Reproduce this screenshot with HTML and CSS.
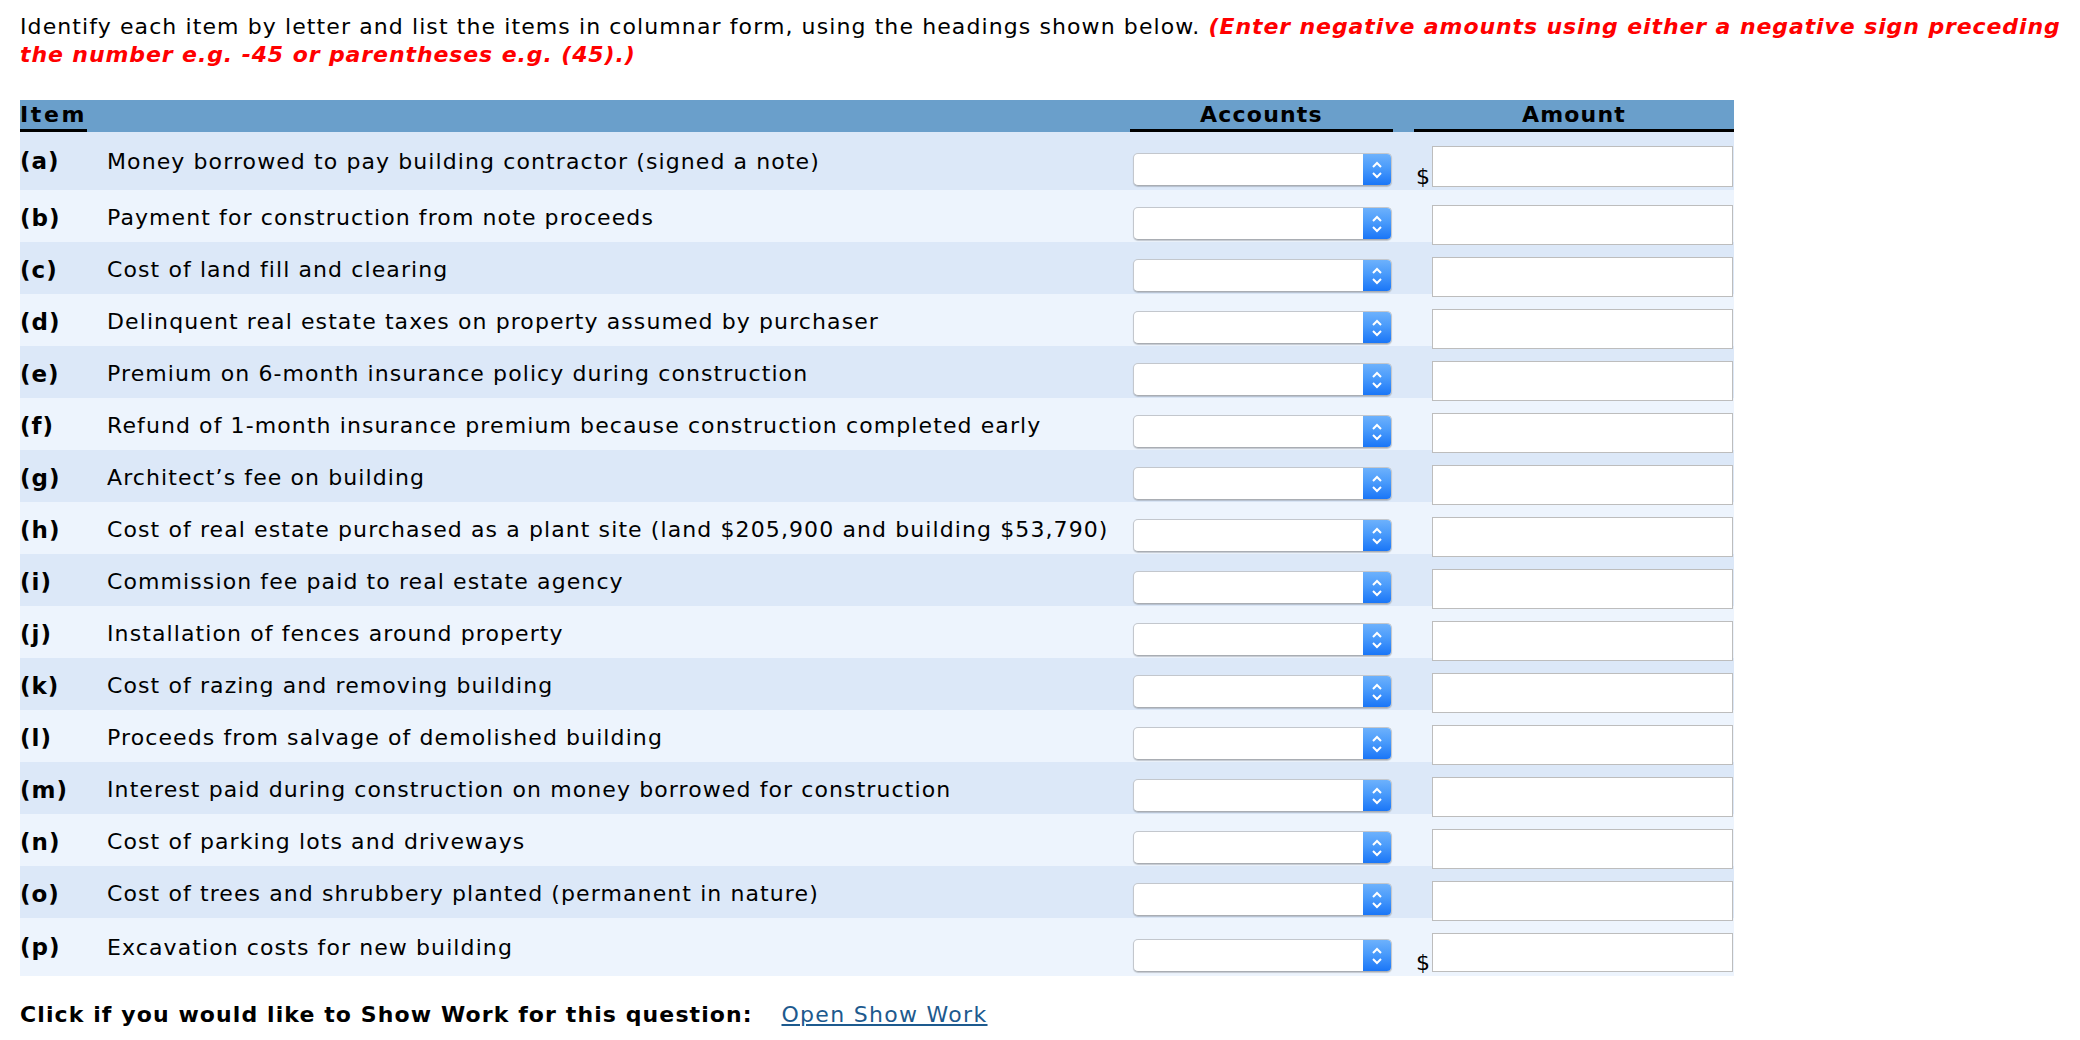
FILE: index.html
```html
<!DOCTYPE html>
<html>
<head>
<meta charset="utf-8">
<link rel="stylesheet" href="styles.css">
</head>
<body>
<div class="page">
  <p class="intro">Identify each item by letter and list the items in columnar form, using the headings shown below. <span class="warn">(Enter negative amounts using either a negative sign preceding<br>the number e.g. -45 or parentheses e.g. (45).)</span></p>

  <div class="table">
    <div class="row head">
      <div class="h-item"><span>Item</span></div>
      <div class="h-desc"></div>
      <div class="h-col">Accounts</div>
      <div class="h-gap"></div>
      <div class="h-col">Amount</div>
    </div>

    <div class="row dark money">
      <div class="letter">(a)</div><div class="desc">Money borrowed to pay building contractor (signed a note)</div>
      <div class="acc"><div class="sel"><span class="sel-field"></span><span class="sel-btn"><svg width="12" height="20" viewBox="0 0 12 20"><path d="M2 7 L6 3 L10 7 M2 13 L6 17 L10 13" fill="none" stroke="#fff" stroke-width="2"/></svg></span></div></div>
      <div></div>
      <div class="amt"><span class="dollar">$</span><input class="inp" type="text"></div>
    </div>
    <div class="row light">
      <div class="letter">(b)</div><div class="desc">Payment for construction from note proceeds</div>
      <div class="acc"><div class="sel"><span class="sel-field"></span><span class="sel-btn"><svg width="12" height="20" viewBox="0 0 12 20"><path d="M2 7 L6 3 L10 7 M2 13 L6 17 L10 13" fill="none" stroke="#fff" stroke-width="2"/></svg></span></div></div>
      <div></div>
      <div class="amt"><span class="dollar"></span><input class="inp" type="text"></div>
    </div>
    <div class="row dark">
      <div class="letter">(c)</div><div class="desc">Cost of land fill and clearing</div>
      <div class="acc"><div class="sel"><span class="sel-field"></span><span class="sel-btn"><svg width="12" height="20" viewBox="0 0 12 20"><path d="M2 7 L6 3 L10 7 M2 13 L6 17 L10 13" fill="none" stroke="#fff" stroke-width="2"/></svg></span></div></div>
      <div></div>
      <div class="amt"><span class="dollar"></span><input class="inp" type="text"></div>
    </div>
    <div class="row light">
      <div class="letter">(d)</div><div class="desc">Delinquent real estate taxes on property assumed by purchaser</div>
      <div class="acc"><div class="sel"><span class="sel-field"></span><span class="sel-btn"><svg width="12" height="20" viewBox="0 0 12 20"><path d="M2 7 L6 3 L10 7 M2 13 L6 17 L10 13" fill="none" stroke="#fff" stroke-width="2"/></svg></span></div></div>
      <div></div>
      <div class="amt"><span class="dollar"></span><input class="inp" type="text"></div>
    </div>
    <div class="row dark">
      <div class="letter">(e)</div><div class="desc">Premium on 6-month insurance policy during construction</div>
      <div class="acc"><div class="sel"><span class="sel-field"></span><span class="sel-btn"><svg width="12" height="20" viewBox="0 0 12 20"><path d="M2 7 L6 3 L10 7 M2 13 L6 17 L10 13" fill="none" stroke="#fff" stroke-width="2"/></svg></span></div></div>
      <div></div>
      <div class="amt"><span class="dollar"></span><input class="inp" type="text"></div>
    </div>
    <div class="row light">
      <div class="letter">(f)</div><div class="desc">Refund of 1-month insurance premium because construction completed early</div>
      <div class="acc"><div class="sel"><span class="sel-field"></span><span class="sel-btn"><svg width="12" height="20" viewBox="0 0 12 20"><path d="M2 7 L6 3 L10 7 M2 13 L6 17 L10 13" fill="none" stroke="#fff" stroke-width="2"/></svg></span></div></div>
      <div></div>
      <div class="amt"><span class="dollar"></span><input class="inp" type="text"></div>
    </div>
    <div class="row dark">
      <div class="letter">(g)</div><div class="desc">Architect’s fee on building</div>
      <div class="acc"><div class="sel"><span class="sel-field"></span><span class="sel-btn"><svg width="12" height="20" viewBox="0 0 12 20"><path d="M2 7 L6 3 L10 7 M2 13 L6 17 L10 13" fill="none" stroke="#fff" stroke-width="2"/></svg></span></div></div>
      <div></div>
      <div class="amt"><span class="dollar"></span><input class="inp" type="text"></div>
    </div>
    <div class="row light">
      <div class="letter">(h)</div><div class="desc">Cost of real estate purchased as a plant site (land $205,900 and building $53,790)</div>
      <div class="acc"><div class="sel"><span class="sel-field"></span><span class="sel-btn"><svg width="12" height="20" viewBox="0 0 12 20"><path d="M2 7 L6 3 L10 7 M2 13 L6 17 L10 13" fill="none" stroke="#fff" stroke-width="2"/></svg></span></div></div>
      <div></div>
      <div class="amt"><span class="dollar"></span><input class="inp" type="text"></div>
    </div>
    <div class="row dark">
      <div class="letter">(i)</div><div class="desc">Commission fee paid to real estate agency</div>
      <div class="acc"><div class="sel"><span class="sel-field"></span><span class="sel-btn"><svg width="12" height="20" viewBox="0 0 12 20"><path d="M2 7 L6 3 L10 7 M2 13 L6 17 L10 13" fill="none" stroke="#fff" stroke-width="2"/></svg></span></div></div>
      <div></div>
      <div class="amt"><span class="dollar"></span><input class="inp" type="text"></div>
    </div>
    <div class="row light">
      <div class="letter">(j)</div><div class="desc">Installation of fences around property</div>
      <div class="acc"><div class="sel"><span class="sel-field"></span><span class="sel-btn"><svg width="12" height="20" viewBox="0 0 12 20"><path d="M2 7 L6 3 L10 7 M2 13 L6 17 L10 13" fill="none" stroke="#fff" stroke-width="2"/></svg></span></div></div>
      <div></div>
      <div class="amt"><span class="dollar"></span><input class="inp" type="text"></div>
    </div>
    <div class="row dark">
      <div class="letter">(k)</div><div class="desc">Cost of razing and removing building</div>
      <div class="acc"><div class="sel"><span class="sel-field"></span><span class="sel-btn"><svg width="12" height="20" viewBox="0 0 12 20"><path d="M2 7 L6 3 L10 7 M2 13 L6 17 L10 13" fill="none" stroke="#fff" stroke-width="2"/></svg></span></div></div>
      <div></div>
      <div class="amt"><span class="dollar"></span><input class="inp" type="text"></div>
    </div>
    <div class="row light">
      <div class="letter">(l)</div><div class="desc">Proceeds from salvage of demolished building</div>
      <div class="acc"><div class="sel"><span class="sel-field"></span><span class="sel-btn"><svg width="12" height="20" viewBox="0 0 12 20"><path d="M2 7 L6 3 L10 7 M2 13 L6 17 L10 13" fill="none" stroke="#fff" stroke-width="2"/></svg></span></div></div>
      <div></div>
      <div class="amt"><span class="dollar"></span><input class="inp" type="text"></div>
    </div>
    <div class="row dark">
      <div class="letter">(m)</div><div class="desc">Interest paid during construction on money borrowed for construction</div>
      <div class="acc"><div class="sel"><span class="sel-field"></span><span class="sel-btn"><svg width="12" height="20" viewBox="0 0 12 20"><path d="M2 7 L6 3 L10 7 M2 13 L6 17 L10 13" fill="none" stroke="#fff" stroke-width="2"/></svg></span></div></div>
      <div></div>
      <div class="amt"><span class="dollar"></span><input class="inp" type="text"></div>
    </div>
    <div class="row light">
      <div class="letter">(n)</div><div class="desc">Cost of parking lots and driveways</div>
      <div class="acc"><div class="sel"><span class="sel-field"></span><span class="sel-btn"><svg width="12" height="20" viewBox="0 0 12 20"><path d="M2 7 L6 3 L10 7 M2 13 L6 17 L10 13" fill="none" stroke="#fff" stroke-width="2"/></svg></span></div></div>
      <div></div>
      <div class="amt"><span class="dollar"></span><input class="inp" type="text"></div>
    </div>
    <div class="row dark">
      <div class="letter">(o)</div><div class="desc">Cost of trees and shrubbery planted (permanent in nature)</div>
      <div class="acc"><div class="sel"><span class="sel-field"></span><span class="sel-btn"><svg width="12" height="20" viewBox="0 0 12 20"><path d="M2 7 L6 3 L10 7 M2 13 L6 17 L10 13" fill="none" stroke="#fff" stroke-width="2"/></svg></span></div></div>
      <div></div>
      <div class="amt"><span class="dollar"></span><input class="inp" type="text"></div>
    </div>
    <div class="row light money last">
      <div class="letter">(p)</div><div class="desc">Excavation costs for new building</div>
      <div class="acc"><div class="sel"><span class="sel-field"></span><span class="sel-btn"><svg width="12" height="20" viewBox="0 0 12 20"><path d="M2 7 L6 3 L10 7 M2 13 L6 17 L10 13" fill="none" stroke="#fff" stroke-width="2"/></svg></span></div></div>
      <div></div>
      <div class="amt"><span class="dollar">$</span><input class="inp" type="text"></div>
    </div>
  </div>

  <p class="show">Click if you would like to Show Work for this question: <a class="link" href="#">Open Show Work</a></p>
</div>
</body>
</html>
```

FILE: styles.css
```css
html, body {
  margin: 0;
  padding: 0;
  background: #ffffff;
}

.page {
  padding: 0 20px;
  font-family: "DejaVu Sans", Verdana, sans-serif;
  font-size: 22px;
  letter-spacing: 1.1px;
  color: #000;
}

.intro {
  margin: 0;
  padding-top: 13px;
  line-height: 28px;
  white-space: nowrap;
}

.warn {
  color: #ff0000;
  font-weight: bold;
  font-style: italic;
  letter-spacing: 0.9px;
}

.table {
  width: 1714px;
  margin-top: 31px;
}

.row {
  display: grid;
  grid-template-columns: 87px 1023px 263px 21px 320px;
  height: 52px;
}

.row.money {
  height: 58px;
}

.row.dark {
  background: #dce8f8;
}

.row.light {
  background: #edf4fd;
}

.row.head {
  height: 32px;
  background: #6a9fcb;
  font-weight: bold;
}

.h-item {
  display: flex;
  align-items: flex-end;
}

.h-item span {
  display: block;
  line-height: 29px;
  letter-spacing: 2.6px;
  border-bottom: 3px solid #000;
}

.h-col {
  text-align: center;
  line-height: 29px;
  letter-spacing: 1.2px;
  border-bottom: 3px solid #000;
}

.letter {
  font-weight: bold;
  font-size: 23px;
  letter-spacing: 1px;
  align-self: center;
}

.desc {
  align-self: center;
}

.acc {
  padding-left: 3px;
  padding-top: 17px;
}

.money .acc {
  padding-top: 21px;
}

.sel {
  width: 259px;
  height: 33px;
  display: flex;
  box-sizing: border-box;
  border: 1px solid #c3c7cd;
  border-bottom-color: #a9adb3;
  border-radius: 5px;
  box-shadow: 0 1px 1px rgba(0, 0, 0, 0.18);
  background: #ffffff;
  overflow: hidden;
}

.sel-field {
  flex: 1;
}

.sel-btn {
  width: 28px;
  display: flex;
  align-items: center;
  justify-content: center;
  background: linear-gradient(#6db1fc, #4a9bfb 45%, #1a76f7);
}

.amt {
  display: flex;
  align-items: flex-start;
  padding-left: 2px;
}

.dollar {
  width: 16px;
  padding-top: 33px;
  line-height: 24px;
  letter-spacing: 0;
}

.inp {
  margin: 15px 0 0 0;
  width: 301px;
  height: 40px;
  box-sizing: border-box;
  border: 1px solid #bdbdbd;
  background: #ffffff;
  padding: 0;
  outline: none;
}

.money .inp {
  margin-top: 14px;
  height: 41px;
}

.money.last .inp {
  margin-top: 15px;
  height: 39px;
}

.show {
  margin: 27px 0 0 0;
  font-weight: bold;
  line-height: 24px;
  letter-spacing: 1.1px;
}

.link {
  font-weight: normal;
  color: #1d5a8e;
  text-decoration: underline;
  letter-spacing: 1.3px;
  margin-left: 20px;
}
```
